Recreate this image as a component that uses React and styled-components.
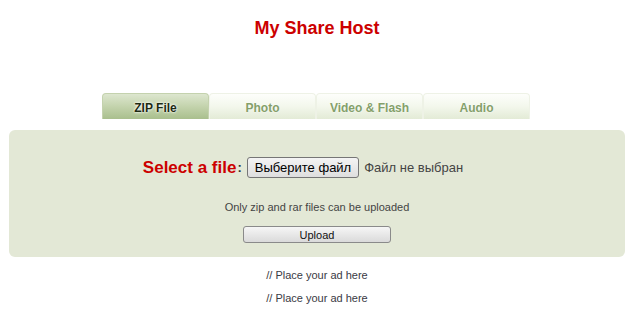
import React from "react";
import styled, { createGlobalStyle } from "styled-components";

const Global = createGlobalStyle`
  html, body { margin: 0; padding: 0; background: #fff; }
  body { font-family: "Liberation Sans", Arial, sans-serif; }
`;

const Page = styled.div`
  width: 634px;
  display: flex;
  flex-direction: column;
  align-items: center;
`;

const Title = styled.h1`
  margin: 18px 0 0;
  font-size: 18px;
  line-height: 21px;
  font-weight: bold;
  color: #cc0000;
`;

const Tabs = styled.div`
  margin-top: 54px;
  margin-left: -2px;
  display: flex;
`;

const Tab = styled.div`
  width: 107px;
  height: 26px;
  box-sizing: border-box;
  display: flex;
  align-items: center;
  justify-content: center;
  padding-top: 2px;
  font-size: 12px;
  font-weight: bold;
  border-radius: 4px 4px 0 0;
  border: 1px solid ${(p) => (p.$active ? "#c4d2ae" : "#eef2e6")};
  border-bottom: none;
  background: ${(p) =>
    p.$active
      ? "linear-gradient(#dde6cf 0%, #c6d5b0 45%, #a9bf8d 100%)"
      : "linear-gradient(#fdfefb 0%, #f3f7ec 50%, #e3ebd6 100%)"};
  color: ${(p) => (p.$active ? "#1d2a12" : "#84a06a")};
  text-shadow: ${(p) =>
    p.$active ? "0 0 3px #fff, 0 0 2px #fff" : "0 0 2px #fff"};
`;

const Panel = styled.div`
  margin-top: 11px;
  width: 616px;
  height: 127px;
  box-sizing: border-box;
  background: #e3e8d6;
  border-radius: 6px;
  display: flex;
  flex-direction: column;
  align-items: center;
  padding-top: 27px;
`;

const SelectRow = styled.div`
  display: flex;
  align-items: center;
  margin-left: -28px;
`;

const Label = styled.span`
  font-size: 17px;
  font-weight: bold;
  color: #cc0000;
`;

const Colon = styled.span`
  font-size: 13px;
  font-weight: bold;
  color: #333;
  margin: 0 5px 0 1px;
`;

const FileButton = styled.button`
  font-family: "Liberation Sans", Arial, sans-serif;
  font-size: 13px;
  height: 21px;
  padding: 0 7px;
  border: 1px solid #767676;
  border-radius: 3px;
  background: linear-gradient(#f4f4f4, #dedede);
  color: #000;
`;

const NoFile = styled.span`
  font-size: 13px;
  color: #444;
  margin-left: 5px;
`;

const Note = styled.div`
  margin-top: 23px;
  font-size: 11px;
  color: #444;
`;

const UploadButton = styled.button`
  margin-top: 13px;
  width: 148px;
  height: 17px;
  padding: 0;
  font-family: "Liberation Sans", Arial, sans-serif;
  font-size: 11px;
  color: #111;
  border: 1px solid #8a8a8a;
  border-radius: 3px;
  background: linear-gradient(#f6f6f6, #dadada);
`;

const Ad = styled.div`
  margin-top: ${(p) => p.$top}px;
  font-size: 11px;
  line-height: 13px;
  color: #3a3a44;
`;

export default function App() {
  return (
    <>
      <Global />
      <Page>
        <Title>My Share Host</Title>
        <Tabs>
          <Tab $active>ZIP File</Tab>
          <Tab>Photo</Tab>
          <Tab>Video &amp; Flash</Tab>
          <Tab>Audio</Tab>
        </Tabs>
        <Panel>
          <SelectRow>
            <Label>Select a file</Label>
            <Colon>:</Colon>
            <FileButton>Выберите файл</FileButton>
            <NoFile>Файл не выбран</NoFile>
          </SelectRow>
          <Note>Only zip and rar files can be uploaded</Note>
          <UploadButton>Upload</UploadButton>
        </Panel>
        <Ad $top={12}>// Place your ad here</Ad>
        <Ad $top={10}>// Place your ad here</Ad>
      </Page>
    </>
  );
}
